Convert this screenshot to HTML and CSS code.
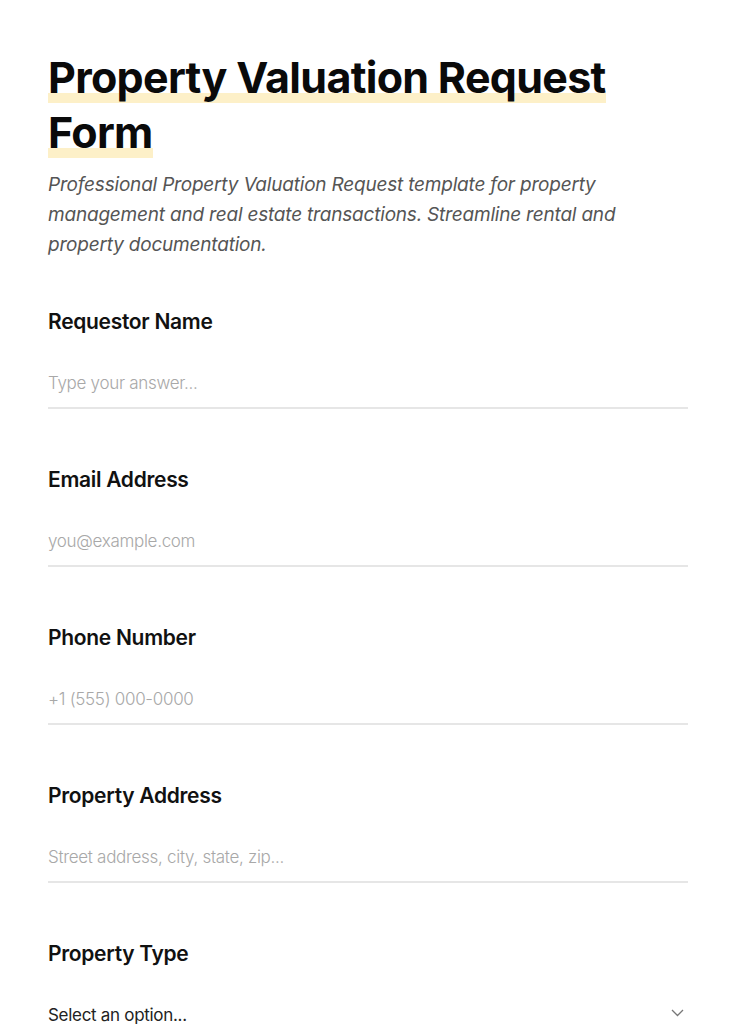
FILE: index.html
```html
<!DOCTYPE html>
<html lang="en">
<head>
    <meta charset="UTF-8">
    <meta name="viewport" content="width=device-width, initial-scale=1.0">
    <title>Property Valuation Request Form</title>
    <link rel="stylesheet" href="styles.css">
</head>
<body>
    <div class="container">
        <h1><span class="highlight">Property Valuation Request Form</span></h1>
        <p class="description">Professional Property Valuation Request template for property management and real estate transactions. Streamline rental and property documentation.</p>

        <form class="form">
            <div class="form-group">
                <label for="name">Requestor Name</label>
                <input type="text" id="name" name="name" placeholder="Type your answer...">
            </div>

            <div class="form-group">
                <label for="email">Email Address</label>
                <input type="email" id="email" name="email" placeholder="you@example.com">
            </div>

            <div class="form-group">
                <label for="phone">Phone Number</label>
                <input type="tel" id="phone" name="phone" placeholder="+1 (555) 000-0000">
            </div>

            <div class="form-group">
                <label for="address">Property Address</label>
                <input type="text" id="address" name="address" placeholder="Street address, city, state, zip...">
            </div>

            <div class="form-group">
                <label for="type">Property Type</label>
                <div class="select-wrap">
                    <select id="type" name="type">
                        <option value="">Select an option...</option>
                        <option>Single Family Home</option>
                        <option>Condominium</option>
                        <option>Multi-Family</option>
                        <option>Commercial</option>
                    </select>
                    <svg class="chevron" width="13" height="8" viewBox="0 0 13 8" fill="none">
                        <path d="M1 1l5.5 5.5L12 1" stroke="#777" stroke-width="1.3"/>
                    </svg>
                </div>
            </div>
        </form>
    </div>
</body>
</html>
```

FILE: styles.css
```css
body {
    margin: 0;
    background: #fff;
    font-family: Inter, "Noto Sans", sans-serif;
    color: #111;
}
.container {
    padding: 50px 48px 40px;
    max-width: 640px;
}
h1 {
    margin: 0;
    font-size: 43px;
    line-height: 55px;
    font-weight: 700;
    letter-spacing: -0.7px;
    color: #0a0a0a;
}
.highlight {
    background: linear-gradient(to bottom, transparent 80%, #fdf0c8 80%);
}
.description {
    margin: 10px 0 0;
    font-size: 19px;
    line-height: 30px;
    font-style: italic;
    color: #555;
    letter-spacing: -0.2px;
    max-width: 575px;
}
.form {
    margin-top: 48px;
}
.form-group {
    margin-bottom: 57px;
}
label {
    display: block;
    font-size: 21px;
    font-weight: 600;
    letter-spacing: -0.3px;
    line-height: 28px;
    color: #111;
}
input, select {
    display: block;
    width: 100%;
    box-sizing: border-box;
    margin-top: 30px;
    padding: 7px 0 14px;
    border: none;
    border-bottom: 2px solid #e6e6e6;
    font-family: inherit;
    font-size: 17px;
    font-weight: 300;
    letter-spacing: -0.3px;
    color: #111;
    background: transparent;
    outline: none;
}
input::placeholder {
    color: #a8a8a8;
}
.select-wrap {
    position: relative;
    margin-top: 30px;
}
select {
    margin-top: 0;
    appearance: none;
    -webkit-appearance: none;
    font-weight: 400;
    color: #222;
}
.chevron {
    position: absolute;
    right: 4px;
    top: 11px;
}
```
